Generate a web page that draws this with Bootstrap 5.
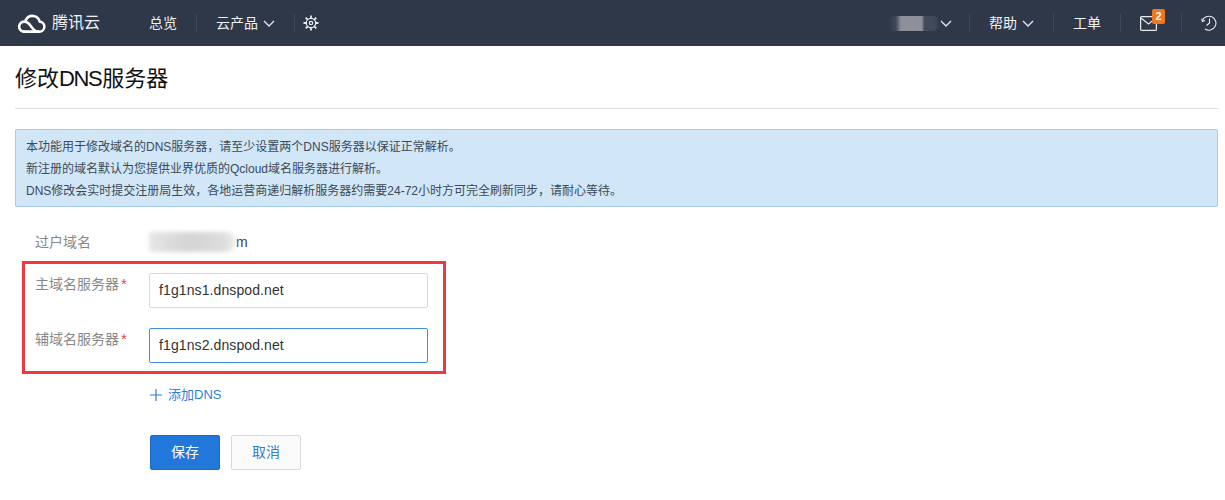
<!DOCTYPE html>
<html lang="zh-CN">
<head>
<meta charset="utf-8">
<title>修改DNS服务器</title>
<link href="https://cdn.jsdelivr.net/npm/bootstrap@5.3.0/dist/css/bootstrap.min.css" rel="stylesheet">
<style>
body{font-family:"Liberation Sans","Noto Sans CJK SC",sans-serif;font-size:13px;color:#222;background:#fff;overflow:hidden;height:500px}
.topbar{height:46px;background:#2e3848;color:#e8eaed;padding:0}
.brand-box{width:130px;padding-left:16px;gap:6px;font-size:16px;color:#eef0f2}
.top-item{font-size:14px;color:#f0f2f4;padding:0 19px;height:100%;gap:5px}
.top-item-user{gap:0;padding-right:17px}
.top-sep{width:1px;height:18px;background:#3d4859}
.redact-nav{width:52px;height:15px;background:linear-gradient(90deg,#2e3848 0,#3f4857 15%,#8d9098 25%,#8d9098 65%,#434b59 70%,#3f4857 90%,#2e3848);border-radius:7px}
.notice-num{position:absolute;top:-7px;left:12px;width:13px;height:15px;background:#f0761f;color:#fff;font-size:11px;font-weight:700;line-height:15px;text-align:center;border-radius:2px}
.page-wrap{padding:0 7px 0 15px}
.page-title{font-size:22px;line-height:30px;height:63px;padding-top:18px;margin:0;font-weight:400;color:#111;border-bottom:1px solid #ddd}
.title-latin{letter-spacing:-1.4px;margin-right:1px}
.info-box{margin:20px 0 0;padding:6px 10px 5px;height:78px;background:#d1e6f7;border:1px solid #a6cbe9;border-radius:2px;font-size:12px;line-height:22px;color:#3a4a58}
.form-row{display:flex;align-items:center}
.lbl{width:134px;padding-left:20px;color:#888;flex:none;font-size:14px}
.req{color:#e54545;margin-left:2px;font-size:15px;line-height:1}
.domain-row{height:36px;margin-top:17px}
.blur-name{width:87px;height:20px;background:linear-gradient(90deg,#e6e6e6,#d4d4d4 45%,#dcdcdc 85%,#eee);border-radius:3px 12px 12px 3px;filter:blur(2px)}
.dom-end{font-size:14px;color:#444;margin-left:0}
.red-frame{width:424px;height:113px;margin:1px 0 0 7px;border:3px solid #f0393c;padding:8px 0 0 10px}
.lbl-in{width:114px;flex:none;align-self:flex-start;padding-top:2px;color:#888;font-size:14px}
.frame-row{height:36px;margin-bottom:19px}
.dns-input{width:279px;height:35px;border:1px solid #d9d9d9;border-radius:2px;padding:0 9px;font-size:14px;letter-spacing:.1px;color:#333;background:#fff;box-shadow:none}
.dns-input.is-on{border-color:#3f8ee0}
.add-row{margin:11px 0 0 135px;color:#2f7fd8;font-size:13px;gap:6px;height:20px}
.btn-row{margin:30px 0 0 135px;gap:11px}
.act-btn{width:70px;height:35px;font-size:14px;padding:0;border-radius:2px;line-height:33px}
.act-save{background:#2277da;border-color:#1b6cc8;color:#fff}
.act-cancel{background:#fbfbfb;border-color:#d9d9d9;color:#2f7fd8}
</style>
</head>
<body>
<nav class="topbar d-flex align-items-center">
  <div class="brand-box d-flex align-items-center">
    <svg width="30" height="20" viewBox="0 0 32 22" fill="none" stroke="#fff" stroke-width="2.8" stroke-linecap="round" stroke-linejoin="round"><path d="M8 20.500h17a5.400 5.400 0 0 0 .6-10.800A8.200 8.200 0 0 0 10.300 7.600"/><path d="M8 20.500a5.500 5.500 0 1 1 1-11c3 0 5 2.400 7 5s3.800 6 8 6"/></svg>
    <span>腾讯云</span>
  </div>
  <div class="top-item d-flex align-items-center">总览</div>
  <span class="top-sep"></span>
  <div class="top-item d-flex align-items-center">云产品
    <svg width="12" height="7" viewBox="0 0 12 7" fill="none" stroke="#e8eaed" stroke-width="1.3"><path d="M1 1l5 5 5-5"/></svg>
  </div>
  <span class="top-sep"></span>
  <div class="top-item d-flex align-items-center px-2">
    <svg width="16" height="16" viewBox="0 0 16 16" fill="none" stroke="#e8eaed" stroke-width="1.2"><circle cx="8" cy="8" r="4.700"/><circle cx="8" cy="8" r="1.700"/><path stroke-width="1.800" d="M8 .5v2.800M8 12.700v2.800M.5 8h2.800M12.700 8h2.800M2.700 2.700l2 2M11.300 11.300l2 2M13.300 2.700l-2 2M4.700 11.300l-2 2"/></svg>
  </div>
  <div class="ms-auto d-flex align-items-center h-100">
    <div class="top-item top-item-user d-flex align-items-center">
      <span class="redact-nav"></span>
      <svg width="12" height="7" viewBox="0 0 12 7" fill="none" stroke="#e8eaed" stroke-width="1.3"><path d="M1 1l5 5 5-5"/></svg>
    </div>
    <span class="top-sep"></span>
    <div class="top-item d-flex align-items-center">帮助
      <svg width="12" height="7" viewBox="0 0 12 7" fill="none" stroke="#e8eaed" stroke-width="1.3"><path d="M1 1l5 5 5-5"/></svg>
    </div>
    <span class="top-sep"></span>
    <div class="top-item d-flex align-items-center">工单</div>
    <span class="top-sep"></span>
    <div class="top-item d-flex align-items-center pe-4">
      <span class="position-relative d-block" style="height:15px">
        <svg class="d-block" width="17" height="15" viewBox="0 0 17 15" fill="none" stroke="#e8eaed" stroke-width="1.2"><rect x=".6" y=".6" width="15.800" height="13.800" rx="1"/><path d="M1 2l7.500 6L16 2"/></svg>
        <span class="notice-num">2</span>
      </span>
    </div>
    <span class="top-sep"></span>
    <div class="top-item d-flex align-items-center pe-2">
      <svg width="16" height="16" viewBox="0 0 16 16" fill="none" stroke="#e8eaed" stroke-width="1.1"><path d="M4 14A7 7 0 1 0 1.300 6"/><path d="M8.500 3.500V8l-3 2.500"/><path d="M.8 3.500l.5 3 2.700-1"/></svg>
    </div>
  </div>
</nav>
<main class="page-wrap">
  <h1 class="page-title">修改<span class="title-latin">DNS</span>服务器</h1>
  <div class="info-box">
    <div>本功能用于修改域名的DNS服务器，请至少设置两个DNS服务器以保证正常解析。</div>
    <div>新注册的域名默认为您提供业界优质的Qcloud域名服务器进行解析。</div>
    <div>DNS修改会实时提交注册局生效，各地运营商递归解析服务器约需要24-72小时方可完全刷新同步，请耐心等待。</div>
  </div>
  <div class="form-row domain-row">
    <div class="lbl">过户域名</div>
    <div class="blur-name"></div><span class="dom-end">m</span>
  </div>
  <div class="red-frame">
    <div class="form-row frame-row">
      <div class="lbl-in">主域名服务器<span class="req">*</span></div>
      <input class="form-control dns-input" value="f1g1ns1.dnspod.net">
    </div>
    <div class="form-row frame-row">
      <div class="lbl-in">辅域名服务器<span class="req">*</span></div>
      <input class="form-control dns-input is-on" value="f1g1ns2.dnspod.net">
    </div>
  </div>
  <div class="add-row d-flex align-items-center">
    <svg width="12" height="12" viewBox="0 0 12 12" stroke="#2f7fd8" stroke-width="1.2"><path d="M0 6h12M6 0v12"/></svg>
    <span>添加DNS</span>
  </div>
  <div class="btn-row d-flex">
    <button type="button" class="btn act-btn act-save">保存</button>
    <button type="button" class="btn act-btn act-cancel">取消</button>
  </div>
</main>
<script src="https://cdn.jsdelivr.net/npm/bootstrap@5.3.0/dist/js/bootstrap.bundle.min.js"></script>
</body>
</html>
